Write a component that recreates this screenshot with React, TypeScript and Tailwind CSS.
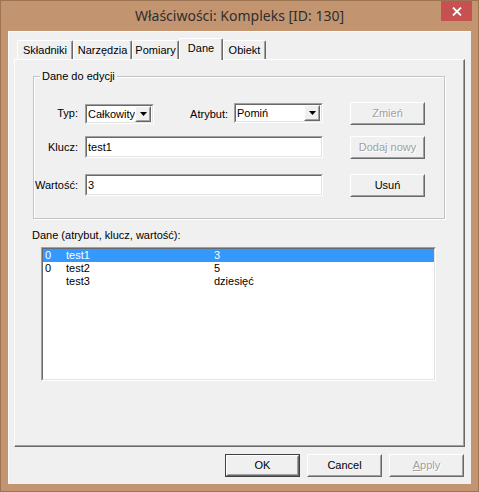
import React from "react";

const F = "font-['Liberation_Sans',Arial,sans-serif]";

function Raised({
  children,
  className = "",
  def = false,
  disabled = false,
}: {
  children: React.ReactNode;
  className?: string;
  def?: boolean;
  disabled?: boolean;
}) {
  const core = (
    <div className="h-full w-full border border-t-white border-l-white border-r-[#696969] border-b-[#696969]">
      <div
        className={`flex h-full w-full items-center justify-center border border-t-[#f0f0f0] border-l-[#f0f0f0] border-r-[#a0a0a0] border-b-[#a0a0a0] bg-[#f0f0f0] text-[11px] leading-[13px] ${
          disabled ? "text-[#a0a0a0] [text-shadow:1px_1px_0_#ffffff]" : "text-black"
        }`}
      >
        {children}
      </div>
    </div>
  );
  return (
    <div className={`${className} ${def ? "border border-[#404040]" : ""}`}>{core}</div>
  );
}

function Sunken({ children, className = "" }: { children?: React.ReactNode; className?: string }) {
  return (
    <div className={`border border-t-[#a0a0a0] border-l-[#a0a0a0] border-r-white border-b-white ${className}`}>
      <div className="h-full w-full border border-t-[#696969] border-l-[#696969] border-r-[#e3e3e3] border-b-[#e3e3e3] bg-white">
        {children}
      </div>
    </div>
  );
}

function Combo({ value, className }: { value: string; className: string }) {
  return (
    <Sunken className={className}>
      <div className="flex h-full items-center">
        <span className="flex-1 pl-[1px] text-[11px] leading-[13px] text-black">{value}</span>
        <div className="mr-[1px] h-[16px] w-[16px] border border-t-white border-l-white border-r-[#696969] border-b-[#696969]">
          <div className="flex h-full w-full items-center justify-center border border-t-[#f0f0f0] border-l-[#f0f0f0] border-r-[#a0a0a0] border-b-[#a0a0a0] bg-[#f0f0f0]">
            <svg width="7" height="4" viewBox="0 0 7 4">
              <path d="M0 0h7L3.5 4z" fill="#000" />
            </svg>
          </div>
        </div>
      </div>
    </Sunken>
  );
}

function Tab({ label, width, selected = false }: { label: string; width: number; selected?: boolean }) {
  const w: Record<number, string> = {
    56: "w-[56px]",
    59: "w-[59px]",
    47: "w-[47px]",
    44: "w-[44px]",
    43: "w-[43px]",
  };
  return (
    <div
      className={`${w[width]} ${
        selected ? "relative z-10 -mb-[1px] h-[22px] pt-[3px]" : "h-[19px] pt-[3px]"
      } flex justify-center rounded-t-[2px] border-l border-t border-r border-l-white border-t-white border-r-[#696969] bg-[#f0f0f0] text-[11px] leading-[13px] text-black shadow-[inset_-1px_0_0_#a0a0a0]`}
    >
      {label}
    </div>
  );
}

export default function App() {
  return (
    <div className={`${F} h-[492px] w-[479px] border border-[#9c7453] bg-[#c29570]`}>
      {/* title bar */}
      <div className="flex h-[30px] items-start">
        <div className="w-[37px]" />
        <div className="flex h-[30px] flex-1 items-center justify-center pb-[1px] font-['Noto_Sans',sans-serif] text-[14px] text-[#2e2e2e]">
          Właściwości: Kompleks [ID: 130]
        </div>
        <div className="mr-[6px] flex h-[20px] w-[31px] items-center justify-center bg-[#c75050]">
          <svg width="10" height="9" viewBox="0 0 10 9">
            <path d="M1 0.5L9 8.5M9 0.5L1 8.5" stroke="#fff" strokeWidth="1.8" />
          </svg>
        </div>
      </div>

      {/* client area */}
      <div className="ml-[7px] h-[453px] w-[463px] border-l border-t border-l-[#fbfbfb] border-t-[#fbfbfb] bg-[#f0f0f0] pl-[5px] pt-[6px]">
        {/* tabs */}
        <div className="ml-[3px] flex h-[21px] items-end">
          <Tab label="Składniki" width={56} />
          <Tab label="Narzędzia" width={59} />
          <Tab label="Pomiary" width={47} />
          <Tab label="Dane" width={44} selected />
          <Tab label="Obiekt" width={43} />
        </div>

        {/* panel */}
        <div className="h-[388px] w-[451px] border border-l-white border-t-white border-r-[#696969] border-b-[#696969] shadow-[inset_-1px_-1px_0_#a0a0a0]">
          {/* group box */}
          <div className="relative ml-[18px] mt-[16px] h-[143px] w-[412px] border border-[#c4c4c4] shadow-[inset_1px_1px_0_#ffffff,1px_1px_0_#ffffff]">
            <span className="absolute -top-[7px] left-[6px] bg-[#f0f0f0] px-[2px] text-[11px] leading-[13px] text-black">
              Dane do edycji
            </span>
            <div className="flex flex-col pt-[24px] text-[11px] leading-[13px] text-black">
              {/* row 1 */}
              <div className="flex h-[24px] items-center">
                <div className="flex w-[44px] justify-end whitespace-nowrap">Typ:</div>
                <Combo value="Całkowity" className="ml-[7px] mt-[2px] h-[20px] w-[69px]" />
                <div className="flex w-[74px] justify-end whitespace-nowrap pt-[3px]">Atrybut:</div>
                <Combo value="Pomiń" className="ml-[6px] h-[20px] w-[89px]" />
                <Raised disabled className="ml-[27px] h-[23px] w-[75px]">
                  Zmień
                </Raised>
              </div>
              {/* row 2 */}
              <div className="mt-[10px] flex h-[24px] items-center">
                <div className="flex w-[44px] justify-end whitespace-nowrap">Klucz:</div>
                <Sunken className="ml-[7px] h-[22px] w-[238px]">
                  <div className="flex h-full items-center pl-[1px]">test1</div>
                </Sunken>
                <Raised disabled className="ml-[27px] h-[23px] w-[75px]">
                  Dodaj nowy
                </Raised>
              </div>
              {/* row 3 */}
              <div className="mt-[14px] flex h-[24px] items-center">
                <div className="flex w-[44px] justify-end whitespace-nowrap">Wartość:</div>
                <Sunken className="ml-[7px] h-[22px] w-[238px]">
                  <div className="flex h-full items-center pl-[1px]">3</div>
                </Sunken>
                <Raised className="ml-[27px] h-[23px] w-[75px]">Usuń</Raised>
              </div>
            </div>
          </div>

          {/* list label */}
          <div className="ml-[17px] mt-[10px] text-[11px] leading-[13px] text-black">
            Dane (atrybut, klucz, wartość):
          </div>

          {/* list box */}
          <Sunken className="ml-[26px] mt-[5px] h-[134px] w-[395px]">
            <div className="text-[11px] leading-[13px] text-black">
              {[
                { a: "0", k: "test1", v: "3", sel: true },
                { a: "0", k: "test2", v: "5", sel: false },
                { a: "", k: "test3", v: "dziesięć", sel: false },
              ].map((r) => (
                <div
                  key={r.k}
                  className={`grid h-[13px] grid-cols-[21px_148px_1fr] pl-[2px] ${
                    r.sel ? "bg-[#3399ff] text-white" : ""
                  }`}
                >
                  <span>{r.a}</span>
                  <span>{r.k}</span>
                  <span>{r.v}</span>
                </div>
              ))}
            </div>
          </Sunken>
        </div>

        {/* bottom buttons */}
        <div className="mr-[7px] mt-[7px] flex justify-end gap-[7px]">
          <Raised def className="h-[23px] w-[75px]">
            OK
          </Raised>
          <Raised className="h-[23px] w-[75px]">Cancel</Raised>
          <Raised disabled className="h-[23px] w-[75px]">
            <span>
              <span className="underline">A</span>pply
            </span>
          </Raised>
        </div>
      </div>
    </div>
  );
}
